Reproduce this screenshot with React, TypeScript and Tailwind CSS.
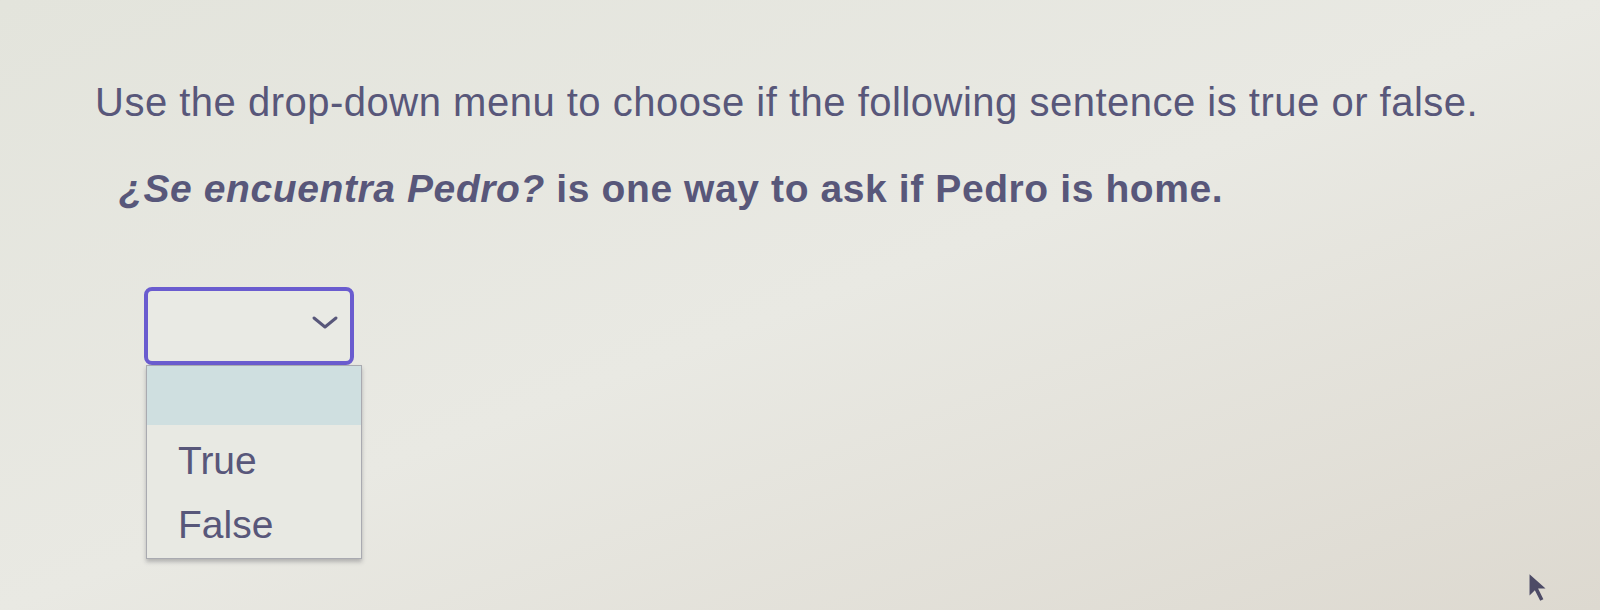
export default function App() {
  return (
    <div className="w-[1600px] h-[610px] overflow-hidden bg-gradient-to-br from-[#e3e4dc] via-[#e9e9e3] to-[#ddd9d0] font-['Liberation_Sans',Arial,sans-serif] text-[#58577a] relative">
      <div className="pl-[95px] pt-[79px]">
        <p className="text-[40px] leading-[46px] tracking-[0.5px]">
          Use the drop-down menu to choose if the following sentence is true or false.
        </p>
        <p className="mt-[41px] pl-[24px] text-[39px] leading-[46px] font-bold tracking-[0.6px]">
          <span className="italic">¿Se encuentra Pedro?</span> is one way to ask if Pedro is home.
        </p>
        <div className="mt-[75px] ml-[49px] w-[218px]">
          <div className="w-[210px] h-[78px] border-[4px] border-[#6a5ccf] rounded-[8px] flex items-center justify-end pr-[11px] bg-[#e9eae4]">
            <svg width="28" height="15" viewBox="0 0 28 15" fill="none" className="mb-[8px]">
              <path d="M3 3l11 9 11-9" stroke="#58577a" strokeWidth="3" strokeLinecap="round" strokeLinejoin="round" />
            </svg>
          </div>
          <div className="ml-[2px] w-[216px] border border-[#a9aab0] bg-[#e8e9e3] shadow-[0_3px_4px_rgba(80,80,90,0.35)]">
            <div className="h-[59px] bg-[#cfdfe0]" />
            <div className="pl-[31px] pt-[14px] pb-[11px] text-[39px] leading-[44px]">
              <div className="h-[64px]">True</div>
              <div className="h-[44px]">False</div>
            </div>
          </div>
        </div>
      </div>
      <svg className="absolute left-[1526px] top-[572px]" width="22" height="32" viewBox="0 0 20 30">
        <path d="M3 2l0 20 5-5 5 10 3-1.5-5-10 7 0z" fill="#4d4b66" />
      </svg>
    </div>
  );
}
